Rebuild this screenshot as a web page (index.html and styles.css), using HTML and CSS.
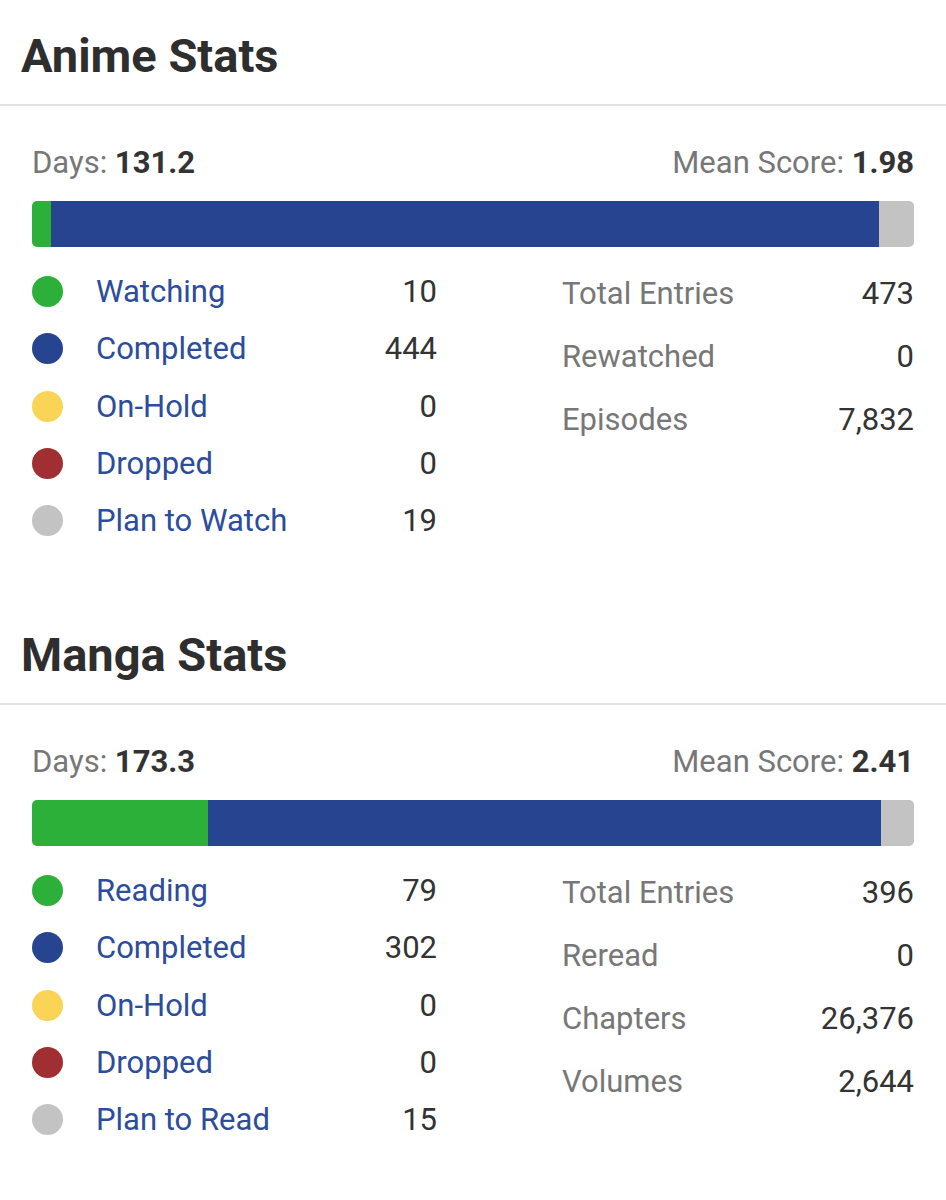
FILE: index.html
```html
<!DOCTYPE html>
<html lang="en">
<head>
  <meta charset="UTF-8">
  <title>Stats</title>
  <link rel="stylesheet" href="styles.css">
</head>
<body>
  <section class="stats">
    <h2 class="stats-title">Anime Stats</h2>
    <div class="stats-body">
      <div class="summary">
        <span>Days: <b>131.2</b></span>
        <span>Mean Score: <b>1.98</b></span>
      </div>
      <div class="bar">
        <span class="seg green" style="width: 2.11%"></span>
        <span class="seg blue" style="width: 93.87%"></span>
        <span class="seg gray" style="width: 4.02%"></span>
      </div>
      <div class="details">
        <ul class="legend">
          <li><i class="dot green"></i><a href="#">Watching</a><span class="num">10</span></li>
          <li><i class="dot blue"></i><a href="#">Completed</a><span class="num">444</span></li>
          <li><i class="dot yellow"></i><a href="#">On-Hold</a><span class="num">0</span></li>
          <li><i class="dot red"></i><a href="#">Dropped</a><span class="num">0</span></li>
          <li><i class="dot gray"></i><a href="#">Plan to Watch</a><span class="num">19</span></li>
        </ul>
        <dl class="totals">
          <div class="row"><dt>Total Entries</dt><dd>473</dd></div>
          <div class="row"><dt>Rewatched</dt><dd>0</dd></div>
          <div class="row"><dt>Episodes</dt><dd>7,832</dd></div>
        </dl>
      </div>
    </div>
  </section>

  <section class="stats">
    <h2 class="stats-title">Manga Stats</h2>
    <div class="stats-body">
      <div class="summary">
        <span>Days: <b>173.3</b></span>
        <span>Mean Score: <b>2.41</b></span>
      </div>
      <div class="bar">
        <span class="seg green" style="width: 19.95%"></span>
        <span class="seg blue" style="width: 76.26%"></span>
        <span class="seg gray" style="width: 3.79%"></span>
      </div>
      <div class="details">
        <ul class="legend">
          <li><i class="dot green"></i><a href="#">Reading</a><span class="num">79</span></li>
          <li><i class="dot blue"></i><a href="#">Completed</a><span class="num">302</span></li>
          <li><i class="dot yellow"></i><a href="#">On-Hold</a><span class="num">0</span></li>
          <li><i class="dot red"></i><a href="#">Dropped</a><span class="num">0</span></li>
          <li><i class="dot gray"></i><a href="#">Plan to Read</a><span class="num">15</span></li>
        </ul>
        <dl class="totals">
          <div class="row"><dt>Total Entries</dt><dd>396</dd></div>
          <div class="row"><dt>Reread</dt><dd>0</dd></div>
          <div class="row"><dt>Chapters</dt><dd>26,376</dd></div>
          <div class="row"><dt>Volumes</dt><dd>2,644</dd></div>
        </dl>
      </div>
    </div>
  </section>
</body>
</html>
```

FILE: styles.css
```css
body { margin: 0; font-family: Roboto, "Liberation Sans", sans-serif; color: #333; background: #fff; }

.stats { padding-bottom: 49.5px; }
.stats-title { margin: 28px 0 0; padding: 0 21px 20px; font-size: 47px; line-height: 56px; font-weight: 700; color: #2e2e2e; border-bottom: 2px solid #e2e2e2; }
.stats-body { padding: 43px 32px 0; }

.summary { display: flex; justify-content: space-between; font-size: 31px; line-height: 28px; color: #777; }
.summary b { color: #333; }

.bar { display: flex; height: 46px; margin-top: 24px; border-radius: 5px; overflow: hidden; }
.seg { display: block; height: 100%; }

.green { background: #2db039; }
.blue { background: #26448f; }
.yellow { background: #f9d457; }
.red { background: #a12f31; }
.gray { background: #c3c3c3; }

.details { display: grid; grid-template-columns: 405px 1fr; column-gap: 125px; margin-top: 16px; }

.legend { list-style: none; margin: 0; padding: 0; }
.legend li { display: flex; align-items: center; height: 57.3px; font-size: 31px; }
.dot { width: 31px; height: 31px; border-radius: 50%; margin-right: 33px; flex: none; }
.legend a { flex: 1; color: #2c4c9c; text-decoration: none; }
.num { color: #333; }

.totals { margin: -1px 0 0; }
.totals .row { display: flex; justify-content: space-between; align-items: center; height: 63px; font-size: 31px; }
.totals dt { color: #777; }
.totals dd { margin: 0; color: #333; }
```
